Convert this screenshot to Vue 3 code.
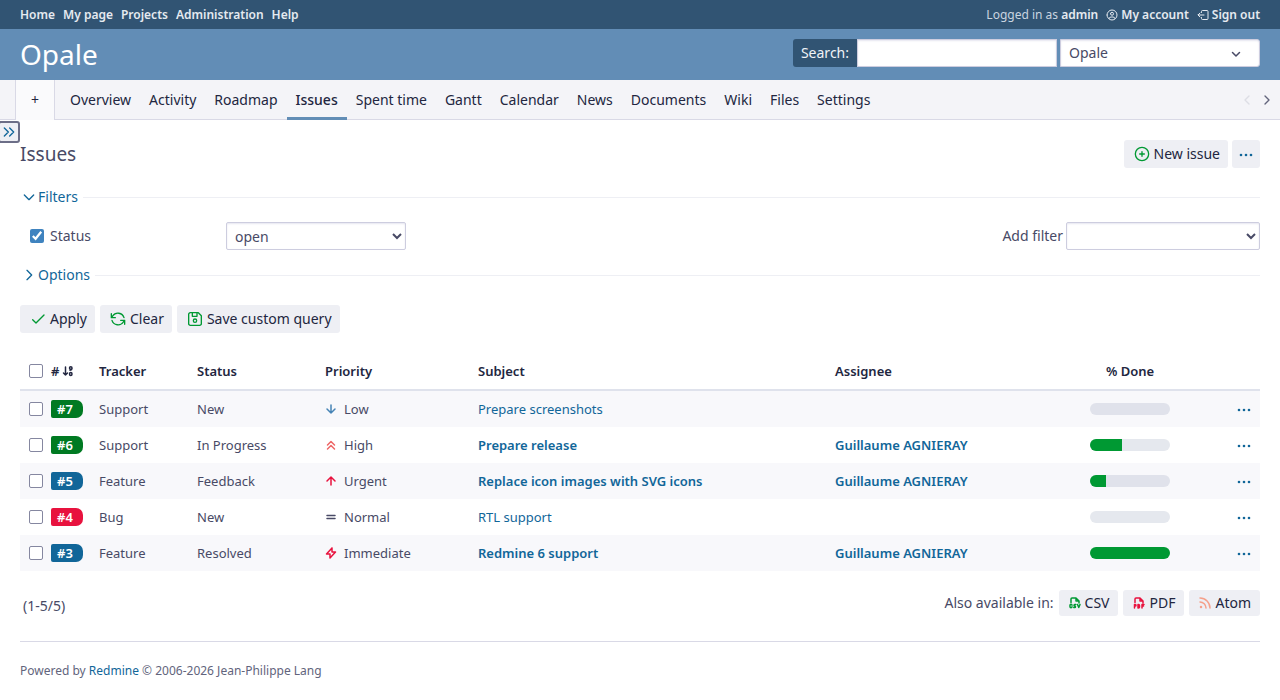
<script setup>
import { ref } from 'vue'

const topLinks = ['Home', 'My page', 'Projects', 'Administration', 'Help']
const tabs = ['Overview', 'Activity', 'Roadmap', 'Issues', 'Spent time', 'Gantt', 'Calendar', 'News', 'Documents', 'Wiki', 'Files', 'Settings']

const search = ref('')
const statusOn = ref(true)
const status = ref('open')
const newFilter = ref('')
const checked = ref([])

const issues = [
  { id: 7, tracker: 'Support', status: 'New', priority: 'Low', subject: 'Prepare screenshots', assignee: '', done: 0 },
  { id: 6, tracker: 'Support', status: 'In Progress', priority: 'High', subject: 'Prepare release', assignee: 'Guillaume AGNIERAY', done: 40 },
  { id: 5, tracker: 'Feature', status: 'Feedback', priority: 'Urgent', subject: 'Replace icon images with SVG icons', assignee: 'Guillaume AGNIERAY', done: 20 },
  { id: 4, tracker: 'Bug', status: 'New', priority: 'Normal', subject: 'RTL support', assignee: '', done: 0 },
  { id: 3, tracker: 'Feature', status: 'Resolved', priority: 'Immediate', subject: 'Redmine 6 support', assignee: 'Guillaume AGNIERAY', done: 100 }
]

const priorityIcons = {
  Low: 'M12 4v16M20 12l-8 8M4 12l8 8',
  High: 'M5 12l7-7l7 7M5 20l7-7l7 7',
  Urgent: 'M12 4v16M20 12l-8-8M4 12l8-8',
  Normal: 'M4 9h16M4 15h16',
  Immediate: 'M14 2v8h7L10 22v-8H3l11-12'
}

function toggleAll(e) {
  checked.value = e.target.checked ? issues.map(i => i.id) : []
}
</script>

<template>
  <div class="page">
    <div class="top-menu">
      <nav>
        <a v-for="link in topLinks" :key="link" href="#">{{ link }}</a>
      </nav>
      <div class="account">
        <span>Logged in as <a href="#">admin</a></span>
        <a href="#" class="with-icon">
          <svg class="icon small" viewBox="0 0 24 24"><path d="M2 12a10 10 0 1 0 20 0a10 10 0 1 0-20 0M9 9.500a3 3 0 1 0 6 0a3 3 0 1 0-6 0M6 19a4 4 0 0 1 4-3h4a4 4 0 0 1 4 3" /></svg>
          My account
        </a>
        <a href="#" class="with-icon">
          <svg class="icon small" viewBox="0 0 24 24"><path d="M9 7V5a2 2 0 0 1 2-2h9a2 2 0 0 1 2 2v14a2 2 0 0 1-2 2h-9a2 2 0 0 1-2-2v-2M14 12H2l4-4M6 16l-4-4" /></svg>
          Sign out
        </a>
      </div>
    </div>

    <header>
      <h1>Opale</h1>
      <div class="quick-search">
        <label for="q">Search:</label>
        <input id="q" type="text" v-model="search" />
        <div class="project-jump">
          <select aria-label="Project">
            <option>Opale</option>
          </select>
          <svg class="icon small" viewBox="0 0 24 24"><path d="M5 9l7 7l7-7" /></svg>
        </div>
      </div>
    </header>

    <div class="main-menu">
      <button class="new-object">+</button>
      <nav>
        <a v-for="tab in tabs" :key="tab" href="#" :class="{ selected: tab === 'Issues' }">{{ tab }}</a>
      </nav>
      <div class="scrollers">
        <button disabled aria-label="Previous tabs"><svg class="icon" viewBox="0 0 24 24"><path d="M15 6l-6 6l6 6" /></svg></button>
        <button aria-label="Next tabs"><svg class="icon" viewBox="0 0 24 24"><path d="M9 6l6 6l-6 6" /></svg></button>
      </div>
    </div>

    <main>
      <button class="sidebar-switch" aria-label="Toggle sidebar">
        <svg class="icon" viewBox="0 0 24 24"><path d="M5 6l6 6l-6 6M13 6l6 6l-6 6" /></svg>
      </button>

      <div class="title-row">
        <h2>Issues</h2>
        <div class="buttons">
          <a href="#" class="btn">
            <svg class="icon green" viewBox="0 0 24 24"><path d="M2 12a10 10 0 1 0 20 0a10 10 0 1 0-20 0M8.500 12h7M12 8.500v7" /></svg>
            New issue
          </a>
          <button class="btn more" aria-label="Actions">
            <svg class="dots" viewBox="0 0 16 16"><circle cx="3" cy="9" r="1.300" /><circle cx="8" cy="9" r="1.300" /><circle cx="13" cy="9" r="1.300" /></svg>
          </button>
        </div>
      </div>

      <div class="legend">
        <button><svg class="icon" viewBox="0 0 24 24"><path d="M5 9l7 7l7-7" /></svg>Filters</button>
      </div>
      <div class="filters">
        <label class="filter-name"><input type="checkbox" v-model="statusOn" /> Status</label>
        <select class="operator" v-model="status" aria-label="Status operator">
          <option>open</option>
          <option>closed</option>
          <option>any</option>
        </select>
        <div class="add-filter">
          <label for="add-filter">Add filter</label>
          <select id="add-filter" v-model="newFilter">
            <option value=""></option>
            <option>Tracker</option>
            <option>Priority</option>
          </select>
        </div>
      </div>
      <div class="legend">
        <button><svg class="icon" viewBox="0 0 24 24"><path d="M9 5l7 7l-7 7" /></svg>Options</button>
      </div>

      <div class="buttons query">
        <a href="#" class="btn">
          <svg class="icon green" viewBox="0 0 24 24"><path d="M4 13l5 5L21 6" /></svg>
          Apply
        </a>
        <a href="#" class="btn">
          <svg class="icon green" viewBox="0 0 24 24"><path d="M21 10A9.500 9.500 0 0 0 4 7.500L2 10M2 4v6h6M3 14a9.500 9.500 0 0 0 17 2.500l2-2.500M22 20v-6h-6" /></svg>
          Clear
        </a>
        <a href="#" class="btn">
          <svg class="icon green" viewBox="0 0 24 24"><path d="M5 2.500h12l4.500 4.500v12a2.500 2.500 0 0 1-2.500 2.500H5A2.500 2.500 0 0 1 2.500 19V5A2.500 2.500 0 0 1 5 2.500M9.500 14.500a2.500 2.500 0 1 0 5 0a2.500 2.500 0 1 0-5 0M8 3v5h7V3" /></svg>
          Save custom query
        </a>
      </div>

      <table>
        <colgroup>
          <col class="c-check" /><col class="c-id" /><col class="c-tracker" /><col class="c-status" /><col class="c-priority" />
          <col class="c-subject" /><col class="c-assignee" /><col class="c-done" /><col class="c-menu" />
        </colgroup>
        <thead>
          <tr>
            <th><input type="checkbox" aria-label="Check all" @change="toggleAll" /></th>
            <th>
              <a href="#" class="sort">#
                <svg class="icon small" viewBox="0 0 24 24"><path d="M7 4v16M3 16l4 4l4-4M15 6a2.500 2.500 0 1 0 5 0a2.500 2.500 0 1 0-5 0M20 6v1q0 3-4 3.500M15 18a2.500 3 0 1 0 5 0a2.500 3 0 1 0-5 0" /></svg>
              </a>
            </th>
            <th>Tracker</th>
            <th>Status</th>
            <th>Priority</th>
            <th>Subject</th>
            <th>Assignee</th>
            <th class="center">% Done</th>
            <th></th>
          </tr>
        </thead>
        <tbody>
          <tr v-for="issue in issues" :key="issue.id">
            <td><input type="checkbox" v-model="checked" :value="issue.id" :aria-label="'Issue ' + issue.id" /></td>
            <td><a href="#" class="badge" :class="issue.tracker.toLowerCase()">#{{ issue.id }}</a></td>
            <td>{{ issue.tracker }}</td>
            <td>{{ issue.status }}</td>
            <td>
              <span class="priority">
                <svg class="icon small" :class="issue.priority.toLowerCase()" viewBox="0 0 24 24"><path :d="priorityIcons[issue.priority]" /></svg>
                {{ issue.priority }}
              </span>
            </td>
            <td><a href="#" :class="{ mine: issue.assignee }">{{ issue.subject }}</a></td>
            <td><a v-if="issue.assignee" href="#" class="mine">{{ issue.assignee }}</a></td>
            <td><div class="progress"><div class="closed" :style="{ width: issue.done + '%' }"></div></div></td>
            <td>
              <button class="row-menu" aria-label="Actions">
                <svg class="dots" viewBox="0 0 16 16"><circle cx="3" cy="9" r="1.300" /><circle cx="8" cy="9" r="1.300" /><circle cx="13" cy="9" r="1.300" /></svg>
              </button>
            </td>
          </tr>
        </tbody>
      </table>

      <div class="below">
        <span class="pagination">(1-5/5)</span>
        <div class="buttons formats">
          <span>Also available in:</span>
          <a href="#" class="btn">
            <svg class="icon small green bold" viewBox="0 0 24 24"><path d="M14 2v6h6M4 11V4a2 2 0 0 1 2-2h8l6 6v4M6 16.500a2 2 0 0 0-4 0v3a2 2 0 0 0 4 0M9.500 21h2c2 0 2-3 0-3s-2-3 0-3h2M17 15l2.500 6l2.500-6" /></svg>
            CSV
          </a>
          <a href="#" class="btn">
            <svg class="icon small red bold" viewBox="0 0 24 24"><path d="M14 2v6h6M4 11V4a2 2 0 0 1 2-2h8l6 6v4M3 18h1.500a1.500 1.500 0 0 0 0-3H3v7M18 18h3M22 15h-4v7M10 15v7h1a2 2 0 0 0 2-2v-3a2 2 0 0 0-2-2z" /></svg>
            PDF
          </a>
          <a href="#" class="btn">
            <svg class="icon small orange" viewBox="0 0 24 24"><path d="M3 20a1 1 0 1 0 2 0a1 1 0 1 0-2 0M2 2a20 20 0 0 1 20 20M2 10a12 12 0 0 1 12 12" /></svg>
            Atom
          </a>
        </div>
      </div>
    </main>

    <footer>Powered by <a href="#">Redmine</a> © 2006-2026 Jean-Philippe Lang</footer>
  </div>
</template>

<style>
body {
  margin: 0;
  background: #fff;
}
</style>

<style scoped>
.page {
  font: 14px/20px "Noto Sans", "Open Sans", sans-serif;
  color: #484a66;
}

.page * {
  box-sizing: border-box;
}

a {
  color: #116699;
  text-decoration: none;
}

button,
input,
select {
  font: inherit;
  color: inherit;
  margin: 0;
}

button {
  border: 0;
  padding: 0;
  background: none;
  cursor: pointer;
}

.icon {
  width: 16px;
  height: 16px;
  flex: none;
  fill: none;
  stroke: currentColor;
  stroke-width: 2;
  stroke-linecap: round;
  stroke-linejoin: round;
}

.icon.small {
  width: 12px;
  height: 12px;
  stroke-width: 3;
}

.dots {
  display: block;
  width: 16px;
  height: 16px;
  fill: #116699;
}

.green {
  color: #009933;
}

.red {
  color: #e8123e;
}

.orange {
  color: #f5a08a;
}

.top-menu {
  display: flex;
  justify-content: space-between;
  height: 29px;
  align-items: center;
  padding: 0 20px;
  background: #315473;
  color: #c9d5e0;
  font-size: 12px;
}

.top-menu nav,
.account {
  display: flex;
  gap: 8px;
}

.top-menu a {
  color: #e5eaf0;
  font-weight: 600;
}

.with-icon {
  display: flex;
  align-items: center;
  gap: 3px;
}

.top-menu .icon {
  stroke-width: 2;
}

header {
  display: flex;
  justify-content: space-between;
  align-items: flex-start;
  padding: 10px 20px;
  background: #628db6;
}

h1 {
  margin: 0;
  color: #fff;
  font-size: 28px;
  line-height: 31px;
  font-weight: 400;
}

.quick-search {
  display: flex;
}

.quick-search label {
  padding: 4px 8px;
  height: 28px;
  border-radius: 3px 0 0 3px;
  background: #315473;
  color: #f0f3f7;
}

.quick-search input,
select {
  height: 28px;
  border: 1px solid #cdcddf;
  background: #fff;
  box-shadow: inset 0 1px 2px #e6e6f0;
  padding: 0 8px;
}

.quick-search input {
  width: 200px;
}

.project-jump {
  position: relative;
  margin-left: 3px;
}

.project-jump select {
  width: 200px;
  appearance: none;
  border-radius: 0 3px 3px 0;
}

.project-jump .icon {
  position: absolute;
  right: 18px;
  top: 9px;
  pointer-events: none;
}

.main-menu {
  display: flex;
  height: 40px;
  padding-left: 15px;
  background: #f4f4f8;
  box-shadow: inset 0 -1px #d9d9e6;
  color: #222640;
}

.new-object {
  width: 40px;
  border: solid #d9d9e6;
  border-width: 0 1px;
  background: #fafafc;
  color: #222640;
}

.main-menu nav {
  display: flex;
  flex: 1;
  padding-left: 6px;
}

.main-menu nav a {
  padding: 10px 9px 7px;
  border-bottom: 3px solid transparent;
  color: #222640;
}

.main-menu nav a.selected {
  border-color: #628db6;
  font-weight: 500;
}

.scrollers {
  display: flex;
  align-items: center;
  gap: 4px;
  padding-right: 5px;
}

.scrollers button {
  display: flex;
  color: #62647c;
}

.scrollers button:disabled {
  opacity: 0.15;
}

main {
  position: relative;
  padding: 20px 20px 0;
}

.sidebar-switch {
  position: absolute;
  left: -2px;
  top: 1px;
  display: flex;
  align-items: center;
  justify-content: center;
  width: 22px;
  height: 22px;
  border: 2px solid #6c6e87;
  border-radius: 3px;
  background: #eeeff4;
  color: #116699;
}

.title-row {
  display: flex;
  justify-content: space-between;
  align-items: center;
}

h2 {
  margin: 0;
  font-size: 19px;
  line-height: 28px;
  font-weight: 400;
}

.buttons {
  display: flex;
  gap: 5px;
}

.title-row .buttons {
  gap: 4px;
}

.btn {
  display: flex;
  align-items: center;
  gap: 4px;
  height: 28px;
  padding: 0 8px 0 10px;
  border-radius: 3px;
  background: #eeeff4;
  color: #222640;
}

.btn.more {
  padding: 0 6px;
}

.legend {
  display: flex;
  align-items: center;
  gap: 5px;
  margin-top: 19px;
}

.legend button {
  display: flex;
  align-items: center;
  gap: 1px;
  padding-left: 1px;
  color: #116699;
}

.legend::after {
  content: "";
  flex: 1;
  height: 1px;
  background: #eeeff4;
}

.filters {
  display: flex;
  align-items: center;
  margin-top: 15px;
  padding-left: 10px;
}

.filters + .legend {
  margin-top: 15px;
}

.filter-name {
  display: flex;
  align-items: center;
  gap: 6px;
  width: 196px;
}

.filter-name input {
  width: 14px;
  height: 14px;
  accent-color: #3f83bf;
}

.filters select {
  width: 180px;
  padding: 0 4px;
  border-radius: 2px;
}

.add-filter {
  display: flex;
  align-items: center;
  gap: 3px;
  margin-left: auto;
}

.filters .add-filter select {
  width: 194px;
}

.query {
  margin-top: 20px;
}

table {
  width: 100%;
  margin-top: 20px;
  table-layout: fixed;
  border-collapse: separate;
  border-spacing: 0;
  font-size: 13px;
}

.c-check {
  width: 23px;
}

.c-id {
  width: 48px;
}

.c-tracker {
  width: 98px;
}

.c-status {
  width: 128px;
}

.c-priority {
  width: 153px;
}

.c-subject {
  width: 357px;
}

.c-assignee {
  width: 243px;
}

.c-done {
  width: 120px;
}

.c-menu {
  width: 70px;
}

th,
td {
  height: 36px;
  padding: 0 8px;
  text-align: left;
  white-space: nowrap;
}

th:first-child,
td:first-child {
  padding: 0 0 0 9px;
}

th {
  height: 38px;
  border-bottom: 2px solid #dfe2ec;
  color: #222640;
  font-weight: 600;
}

th.center {
  text-align: center;
}

tbody tr:nth-child(odd) {
  background: #f8f8fb;
}

th input,
td input {
  display: block;
  appearance: none;
  width: 14px;
  height: 14px;
  border: 1px solid #8587a0;
  border-radius: 2px;
  background: #fff;
}

th input:checked,
td input:checked {
  background: #3f83bf;
}

.sort {
  display: flex;
  align-items: center;
  gap: 3px;
  color: #222640;
}

.badge {
  display: block;
  width: 32px;
  padding-left: 6px;
  border-radius: 2px 7px 7px 2px;
  color: #fff;
  font-weight: 600;
  line-height: 18px;
}

.support {
  background: #007a22;
}

.feature {
  background: #116699;
}

.bug {
  background: #e8123e;
}

.priority {
  display: flex;
  align-items: center;
  gap: 7px;
}

.low {
  color: #4583b5;
}

.high {
  color: #ee6666;
}

.urgent,
.immediate {
  color: #e8123e;
}

.mine {
  font-weight: 600;
}

.progress {
  width: 80px;
  height: 12px;
  margin: 0 auto;
  border-radius: 6px;
  overflow: hidden;
  background: #e5e8ee;
}

tr:nth-child(odd) .progress {
  background: #e0e2eb;
}

.closed {
  height: 100%;
  background: #009933;
}

.row-menu {
  display: block;
  margin-left: auto;
}

.below {
  display: flex;
  justify-content: space-between;
  margin-top: 18px;
  padding-bottom: 25px;
  border-bottom: 1px solid #d9d9e6;
}

.pagination {
  padding: 7px 3px 0;
}

.formats {
  align-items: center;
}

.formats .btn {
  height: 26px;
  padding-right: 9px;
}

footer {
  padding: 19px 20px;
  color: #62647c;
  font-size: 12px;
}
</style>
